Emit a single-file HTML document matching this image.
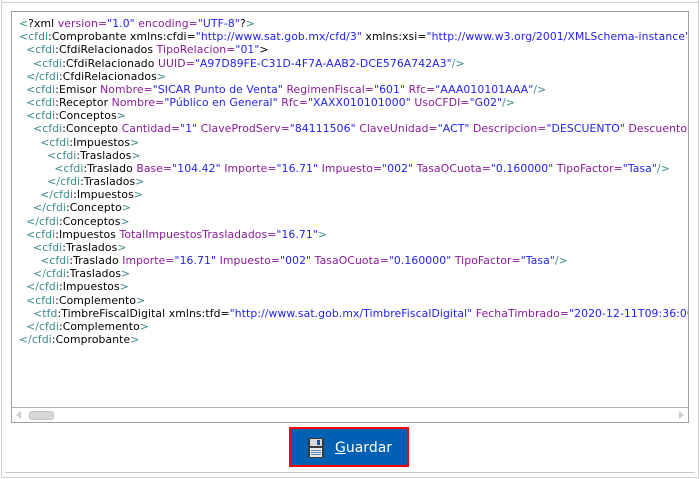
<!DOCTYPE html>
<html><head><meta charset="utf-8"><style>
html,body{margin:0;padding:0;background:#fff;width:700px;height:479px;overflow:hidden;position:relative}
.outer{position:absolute;left:1px;top:0;width:696px;height:477px;border-left:1px solid #d0d0d0;border-right:1px solid #d0d0d0;border-bottom:1px solid #d0d0d0}
.topline{position:absolute;left:1px;top:2px;width:697px;height:1px;background:#d0d0d0}
.box{position:absolute;left:11px;top:11px;width:676px;height:410px;border:1px solid #a0a0a0;background:#fff;overflow:hidden}
.code{position:absolute;left:7px;top:5px;font-family:"DejaVu Sans",sans-serif;font-size:10.8px;line-height:13.17px;white-space:pre;color:#000;letter-spacing:0.1px}
.t{color:#3b8a8a}.a{color:#8a1a9a}.v{color:#2222ee}
.hs{position:absolute;left:0;top:395px;width:676px;height:15px;border-top:1px solid #b0b0b0;background:#fff}
.thumb{position:absolute;left:17px;top:3px;width:23px;height:7px;background:#d8d8d8;border:1px solid #c4c4c4;border-radius:3px}
.al{position:absolute;left:4px;top:3px;width:0;height:0;border-top:4px solid transparent;border-bottom:4px solid transparent;border-right:5px solid #ccc}
.ar{position:absolute;right:4px;top:3px;width:0;height:0;border-top:4px solid transparent;border-bottom:4px solid transparent;border-left:5px solid #ccc}
.btn{position:absolute;left:289px;top:427px;width:116px;height:36px;border:2px solid #ff0000;background:#0060b4;color:#fff;font-family:"DejaVu Sans",sans-serif;font-size:14px}
.btn span{position:absolute;left:44px;top:11px}
.bot{position:absolute;left:5px;top:472px;width:690px;height:1px;background:#c8c8c8}
</style></head><body>
<div class="outer"></div><div class="topline"></div>
<div class="box">
<div class="code"><span class="t">&lt;</span>?xml <span class="a">version=</span><span class="v">"1.0"</span> <span class="a">encoding=</span><span class="v">"UTF-8"</span>?<span class="t">&gt;</span>
<span class="t">&lt;cfdi</span>:Comprobante xmlns:cfdi=<span class="v">"http://www.sat.gob.mx/cfd/3"</span> xmlns:xsi=<span class="v">"http://www.w3.org/2001/XMLSchema-instance"</span>
  <span class="t">&lt;cfdi</span>:CfdiRelacionados <span class="a">TipoRelacion=</span><span class="v">"01"</span>&gt;
    <span class="t">&lt;cfdi</span>:CfdiRelacionado <span class="a">UUID=</span><span class="v">"A97D89FE-C31D-4F7A-AAB2-DCE576A742A3"</span><span class="t">/&gt;</span>
  <span class="t">&lt;/cfdi</span>:CfdiRelacionados<span class="t">&gt;</span>
  <span class="t">&lt;cfdi</span>:Emisor <span class="a">Nombre=</span><span class="v">"SICAR Punto de Venta"</span> <span class="a">RegimenFiscal=</span><span class="v">"601"</span> <span class="a">Rfc=</span><span class="v">"AAA010101AAA"</span><span class="t">/&gt;</span>
  <span class="t">&lt;cfdi</span>:Receptor <span class="a">Nombre=</span><span class="v">"Público en General"</span> <span class="a">Rfc=</span><span class="v">"XAXX010101000"</span> <span class="a">UsoCFDI=</span><span class="v">"G02"</span><span class="t">/&gt;</span>
  <span class="t">&lt;cfdi</span>:Conceptos<span class="t">&gt;</span>
    <span class="t">&lt;cfdi</span>:Concepto <span class="a">Cantidad=</span><span class="v">"1"</span> <span class="a">ClaveProdServ=</span><span class="v">"84111506"</span> <span class="a">ClaveUnidad=</span><span class="v">"ACT"</span> <span class="a">Descripcion=</span><span class="v">"DESCUENTO"</span> <span class="a">Descuento=</span><span class="v">"0"</span>
      <span class="t">&lt;cfdi</span>:Impuestos<span class="t">&gt;</span>
        <span class="t">&lt;cfdi</span>:Traslados<span class="t">&gt;</span>
          <span class="t">&lt;cfdi</span>:Traslado <span class="a">Base=</span><span class="v">"104.42"</span> <span class="a">Importe=</span><span class="v">"16.71"</span> <span class="a">Impuesto=</span><span class="v">"002"</span> <span class="a">TasaOCuota=</span><span class="v">"0.160000"</span> <span class="a">TipoFactor=</span><span class="v">"Tasa"</span><span class="t">/&gt;</span>
        <span class="t">&lt;/cfdi</span>:Traslados<span class="t">&gt;</span>
      <span class="t">&lt;/cfdi</span>:Impuestos<span class="t">&gt;</span>
    <span class="t">&lt;/cfdi</span>:Concepto<span class="t">&gt;</span>
  <span class="t">&lt;/cfdi</span>:Conceptos<span class="t">&gt;</span>
  <span class="t">&lt;cfdi</span>:Impuestos <span class="a">TotalImpuestosTrasladados=</span><span class="v">"16.71"</span><span class="t">&gt;</span>
    <span class="t">&lt;cfdi</span>:Traslados<span class="t">&gt;</span>
      <span class="t">&lt;cfdi</span>:Traslado <span class="a">Importe=</span><span class="v">"16.71"</span> <span class="a">Impuesto=</span><span class="v">"002"</span> <span class="a">TasaOCuota=</span><span class="v">"0.160000"</span> <span class="a">TipoFactor=</span><span class="v">"Tasa"</span><span class="t">/&gt;</span>
    <span class="t">&lt;/cfdi</span>:Traslados<span class="t">&gt;</span>
  <span class="t">&lt;/cfdi</span>:Impuestos<span class="t">&gt;</span>
  <span class="t">&lt;cfdi</span>:Complemento<span class="t">&gt;</span>
    <span class="t">&lt;tfd</span>:TimbreFiscalDigital xmlns:tfd=<span class="v">"http://www.sat.gob.mx/TimbreFiscalDigital"</span> <span class="a">FechaTimbrado=</span><span class="v">"2020-12-11T09:36:00"</span>
  <span class="t">&lt;/cfdi</span>:Complemento<span class="t">&gt;</span>
<span class="t">&lt;/cfdi</span>:Comprobante<span class="t">&gt;</span></div>
<div class="hs"><div class="al"></div><div class="thumb"></div><div class="ar"></div></div>
</div>
<div class="btn">
<svg style="position:absolute;left:17px;top:9px" width="16" height="20" viewBox="0 0 16 20">
<rect x="0" y="0" width="16" height="20" rx="1" fill="#3a3a3a"/>
<rect x="2" y="1" width="12" height="7" fill="#d8d8d8"/>
<rect x="9" y="2" width="3" height="5" fill="#2050a0"/>
<rect x="2" y="10" width="12" height="9" fill="#e8e8e8"/>
<rect x="3" y="12" width="10" height="1" fill="#5a8ac0"/>
<rect x="3" y="14" width="10" height="1" fill="#5a8ac0"/>
<rect x="3" y="16" width="10" height="1" fill="#5a8ac0"/>
</svg>
<span><u>G</u>uardar</span></div>
<div class="bot"></div>
</body></html>
